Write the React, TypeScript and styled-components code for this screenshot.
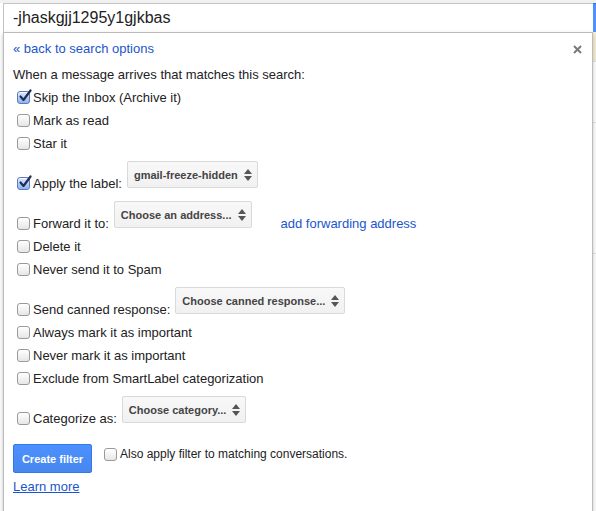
import React from "react";
import styled, { createGlobalStyle } from "styled-components";

const GlobalStyle = createGlobalStyle`
  html, body {
    margin: 0;
    padding: 0;
    background: #ffffff;
  }
  body {
    font-family: "Liberation Sans", Arial, sans-serif;
    font-size: 13px;
    color: #222;
  }
`;

const Page = styled.div`
  width: 596px;
  height: 511px;
  overflow: hidden;
  padding-top: 3px;
  box-sizing: border-box;
  background: linear-gradient(#f1f1f1, #f1f1f1) top / 100% 3px no-repeat, #fff;
`;

const SearchRow = styled.div`
  display: flex;
  height: 29px;
  padding-left: 3px;
`;

const SearchBox = styled.div`
  flex: 1;
  display: flex;
  align-items: center;
  box-sizing: border-box;
  border-top: 1px solid #c4c4c4;
  border-left: 1px solid #c4c4c4;
  background: #fff;
  padding-left: 9px;
  font-size: 16px;
  color: #222;
`;

const SearchButton = styled.div`
  width: 3px;
  background: #4d90fe;
  border-top: 1px solid #3079ed;
`;

const Body = styled.div`
  display: flex;
  padding-left: 3px;
`;

const Panel = styled.div`
  width: 590px;
  box-sizing: border-box;
  border: 1px solid #bcbcbc;
  background: #fff;
  padding: 8px 0 10px 9px;
  box-shadow: 0 2px 4px rgba(0, 0, 0, 0.25);
  position: relative;
  z-index: 1;
`;

const SideStrip = styled.div`
  flex: 1;
  display: flex;
  flex-direction: column;
`;

const SidePiece = styled.div<{ $h: number; $bg: string }>`
  height: ${({ $h }) => $h}px;
  background: ${({ $bg }) => $bg};
  border-bottom: 1px solid #e3e3e3;
`;

const HeaderRow = styled.div`
  display: flex;
  justify-content: space-between;
  align-items: center;
  height: 16px;
  padding-right: 10px;
`;

const Link = styled.a<{ $underline?: boolean }>`
  color: #1a55cc;
  text-decoration: ${({ $underline }) => ($underline ? "underline" : "none")};
  cursor: pointer;
  font-size: 13px;
  line-height: 16px;
`;

const Intro = styled.div`
  margin-top: 6px;
  height: 23px;
  line-height: 23px;
`;

const Row = styled.label<{ $select?: boolean }>`
  display: flex;
  align-items: flex-end;
  height: ${({ $select }) => ($select ? 40 : 23)}px;
`;

const LabelText = styled.span`
  line-height: 23px;
  white-space: nowrap;
`;

const Box = styled.span<{ $checked?: boolean }>`
  position: relative;
  flex: none;
  width: 13px;
  height: 13px;
  box-sizing: border-box;
  margin: 0 3px 5px 4px;
  border-radius: 3px;
  border: 1px solid ${({ $checked }) => ($checked ? "#5a7cb8" : "#9a9a9a")};
  background: ${({ $checked }) =>
    $checked
      ? "linear-gradient(#dfeafc, #8fb4ee)"
      : "linear-gradient(#ffffff, #e6e6e6)"};
  box-shadow: inset 0 1px 0 rgba(255, 255, 255, 0.8);

  svg {
    position: absolute;
    left: 0px;
    top: -3px;
  }
`;

const Select = styled.span`
  display: inline-flex;
  align-items: center;
  gap: 6px;
  height: 27px;
  box-sizing: border-box;
  margin: 0 0 7px 5px;
  padding: 0 5px 0 6px;
  border: 1px solid #d9d9d9;
  border-radius: 2px;
  background: linear-gradient(#f8f8f8, #f1f1f1);
  color: #444;
  font-size: 11px;
  font-weight: bold;
  white-space: nowrap;
`;

const ForwardLink = styled(Link)`
  margin-left: 29px;
  line-height: 23px;
`;

const Footer = styled.div`
  display: flex;
  align-items: flex-start;
  margin-top: 14px;
`;

const CreateButton = styled.button`
  width: 79px;
  height: 29px;
  border: 1px solid #3079ed;
  border-radius: 2px;
  background: linear-gradient(#4d90fe, #4787ed);
  color: #fff;
  font-family: "Liberation Sans", Arial, sans-serif;
  font-size: 11px;
  font-weight: bold;
  padding: 0;
  cursor: pointer;
`;

const AlsoApply = styled.label`
  display: flex;
  align-items: center;
  height: 20px;
  margin-left: 8px;
  line-height: 20px;
  font-size: 12px;

  ${Box} {
    margin-bottom: 0;
  }
`;

const LearnRow = styled.div`
  margin-top: 6px;
`;

const CloseIcon = () => (
  <svg width="9" height="9" viewBox="0 0 9 9">
    <path d="M1 1 L8 8 M8 1 L1 8" stroke="#7a7a7a" strokeWidth="2" />
  </svg>
);

const Arrows = () => (
  <svg width="8" height="12" viewBox="0 0 8 12">
    <path d="M4 0 L8 5 L0 5 Z M0 7 L8 7 L4 12 Z" fill="#555" />
  </svg>
);

const Checkbox = ({ checked }: { checked?: boolean }) => (
  <Box $checked={checked}>
    {checked && (
      <svg width="14" height="14" viewBox="0 0 14 14">
        <path
          d="M2.5 7.5 L5.5 11 L12.5 1.5"
          stroke="#1f2d5c"
          strokeWidth="2.2"
          fill="none"
          strokeLinecap="round"
          strokeLinejoin="round"
        />
      </svg>
    )}
  </Box>
);

type Option = {
  label: string;
  checked?: boolean;
  select?: string;
  link?: string;
};

const options: Option[] = [
  { label: "Skip the Inbox (Archive it)", checked: true },
  { label: "Mark as read" },
  { label: "Star it" },
  { label: "Apply the label:", checked: true, select: "gmail-freeze-hidden" },
  {
    label: "Forward it to:",
    select: "Choose an address...",
    link: "add forwarding address",
  },
  { label: "Delete it" },
  { label: "Never send it to Spam" },
  { label: "Send canned response:", select: "Choose canned response..." },
  { label: "Always mark it as important" },
  { label: "Never mark it as important" },
  { label: "Exclude from SmartLabel categorization" },
  { label: "Categorize as:", select: "Choose category..." },
];

const App = () => {
  return (
    <>
      <GlobalStyle />
      <Page>
        <SearchRow>
          <SearchBox>-jhaskgjj1295y1gjkbas</SearchBox>
          <SearchButton />
        </SearchRow>
        <Body>
          <Panel>
            <HeaderRow>
              <Link>« back to search options</Link>
              <CloseIcon />
            </HeaderRow>
            <Intro>When a message arrives that matches this search:</Intro>
            {options.map((opt) => (
              <Row key={opt.label} $select={!!opt.select}>
                <Checkbox checked={opt.checked} />
                <LabelText>{opt.label}</LabelText>
                {opt.select && (
                  <Select>
                    {opt.select}
                    <Arrows />
                  </Select>
                )}
                {opt.link && <ForwardLink>{opt.link}</ForwardLink>}
              </Row>
            ))}
            <Footer>
              <CreateButton>Create filter</CreateButton>
              <AlsoApply>
                <Checkbox />
                Also apply filter to matching conversations.
              </AlsoApply>
            </Footer>
            <LearnRow>
              <Link $underline>Learn more</Link>
            </LearnRow>
          </Panel>
          <SideStrip>
            <SidePiece $h={29} $bg="#f6eed2" />
            <SidePiece $h={60} $bg="#fff" />
            <SidePiece $h={130} $bg="#fff" />
            <SidePiece $h={260} $bg="#fff" />
          </SideStrip>
        </Body>
      </Page>
    </>
  );
};

export default App;
